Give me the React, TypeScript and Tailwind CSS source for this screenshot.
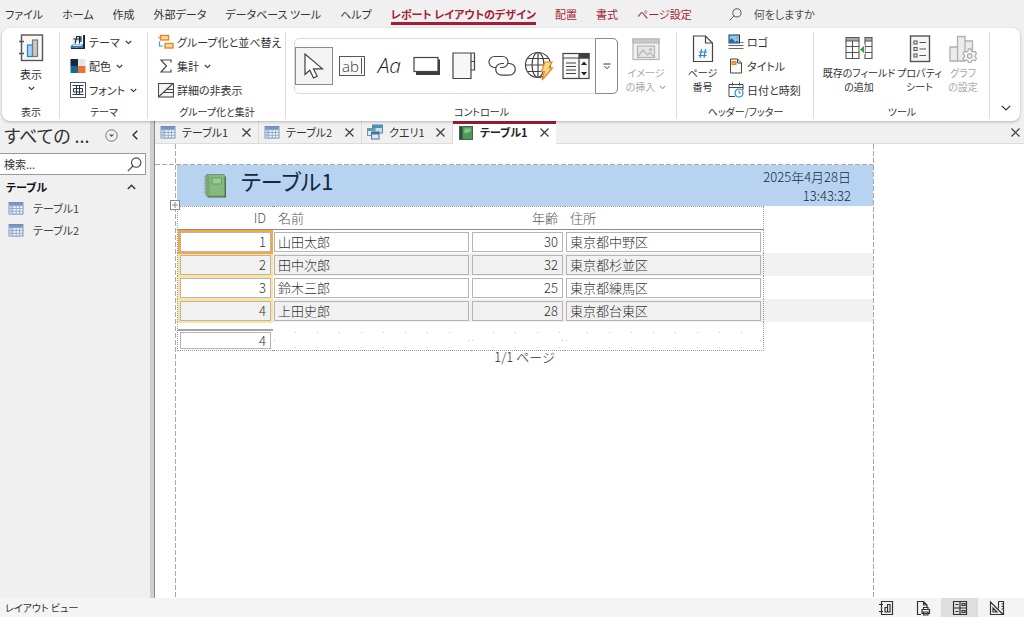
import React from "react";

type IconProps = { className?: string };

const Chevron = ({ className = "" }: IconProps) => (
  <svg viewBox="0 0 7 5" className={`h-[5px] w-[7px] shrink-0 ${className}`} fill="none" stroke="currentColor" strokeWidth="1.1">
    <path d="M0.8 1l2.7 2.6L6.2 1" />
  </svg>
);

const SearchIcon = ({ className = "" }: IconProps) => (
  <svg viewBox="0 0 15 15" className={className} fill="none" stroke="currentColor" strokeWidth="1.1">
    <circle cx="9.2" cy="5.6" r="4.7" />
    <path d="M5.9 9L0.8 14.2" />
  </svg>
);

const CloseIcon = () => (
  <svg viewBox="0 0 9 9" className="size-[9px]" fill="none" stroke="#3b3b3b" strokeWidth="1.2">
    <path d="M0.5 0.5l8 8M8.5 0.5l-8 8" />
  </svg>
);

const ReportViewIcon = () => (
  <svg viewBox="0 0 26 28" className="h-[28px] w-[26px]" fill="none" stroke="#555" strokeWidth="1.2">
    <rect x="3.5" y="1" width="21" height="25.5" fill="#f7f7f7" strokeWidth="1.4" />
    <path d="M1 7.5h5M1 19.5h5" strokeWidth="1.4" />
    <rect x="9.5" y="11" width="5" height="11.5" fill="#a8d4f7" stroke="#1e7fd0" />
    <rect x="14.5" y="6" width="5" height="16.5" fill="#c9c9c9" stroke="#777" />
  </svg>
);

const ThemeIcon = () => (
  <svg viewBox="0 0 16 16" className="size-[16px]">
    <path d="M13 1h2v13h-2z" fill="#16283f" />
    <path d="M2 4h9v4H2z" fill="#eee" />
    <path d="M5 9.500l1.800-7h2.700v7M11 2v6M3.500 5h8" stroke="#16283f" strokeWidth="1.200" fill="none" />
    <path d="M0.500 14c0-2 1-3.500 3-3.500h9.500V14z" fill="#287fc4" />
    <path d="M3 11.500h9" stroke="#c9e2f6" />
    <path d="M5 14c0-1.500 3-1.500 3 0z" fill="#ef7b2e" />
    <path d="M1 14.500h14" stroke="#16283f" />
  </svg>
);

const ColorsIcon = () => (
  <svg viewBox="0 0 16 16" className="size-[16px]">
    <rect x="0.500" y="1" width="7.500" height="7" fill="#152941" />
    <rect x="8" y="1" width="7.500" height="7" fill="#e6e6e6" />
    <rect x="0.500" y="8" width="7.500" height="7" fill="#176b8c" />
    <rect x="8" y="8" width="7.500" height="7" fill="#ed7331" />
  </svg>
);

const FontIcon = () => (
  <svg viewBox="0 0 16 16" className="size-[16px]" fill="none" stroke="#555">
    <rect x="0.500" y="0.500" width="15" height="15" />
    <path d="M2.500 3.500h11M2.500 12.500h11M6.500 3.500v9M9.500 3.500v9M3.500 6.500h9v3.500h-9z" stroke="#22364f" />
  </svg>
);

const GroupSortIcon = () => (
  <svg viewBox="0 0 16 16" className="size-[16px]" fill="none">
    <rect x="2.500" y="1.500" width="8" height="4.500" fill="#fbd9a4" stroke="#e8811c" strokeWidth="1.300" />
    <path d="M0 3.700h2.500" stroke="#e8811c" />
    <rect x="7" y="9.500" width="8" height="4.500" fill="#fbd9a4" stroke="#e8811c" strokeWidth="1.300" />
    <path d="M1.500 7.500v4.500h3.500" stroke="#3b9be0" strokeWidth="1.200" />
  </svg>
);

const SigmaIcon = () => (
  <svg viewBox="0 0 16 16" className="size-[16px]" fill="none" stroke="#4a4a4a" strokeWidth="1.200">
    <path d="M13 4.500V2H3l5.500 6L3 14h10v-2.500" />
  </svg>
);

const HideDetailsIcon = () => (
  <svg viewBox="0 0 16 16" className="size-[16px]" fill="none" stroke="#4a4a4a" strokeWidth="1.100">
    <rect x="0.500" y="1.500" width="15" height="13.500" fill="#f5f5f5" />
    <path d="M1 14.500L15 1.500M9 7.500h6M6 10.500h9" />
  </svg>
);

const ArrowIcon = () => (
  <svg viewBox="0 0 20 26" className="h-[26px] w-[20px]" fill="none" stroke="#3e3e3e" strokeWidth="1.200">
    <path d="M1 1v20.500l4.800-4.200 3.700 7.700 3.700-1.800-3.700-7.300H18.500z" fill="#fff" />
  </svg>
);

const TextBoxIcon = () => (
  <span className="flex h-[20px] w-[26px] items-center justify-center border border-[#555] bg-[#fafafa] font-['Open_Sans'] text-[15px] font-light leading-none text-[#333]">
    ab<span className="ml-[2px] h-[16px] w-px bg-[#555]" />
  </span>
);

const ButtonControlIcon = () => (
  <svg viewBox="0 0 28 20" className="h-[20px] w-[28px]">
    <path d="M3 3.500h24v15.500H3z" fill="#3e3e3e" />
    <rect x="1" y="1.500" width="24" height="14" fill="#fff" stroke="#444" strokeWidth="1.200" />
  </svg>
);

const TabControlIcon = () => (
  <svg viewBox="0 0 24 28" className="h-[28px] w-[24px]" fill="#f7f7f7" stroke="#444" strokeWidth="1.200">
    <path d="M1 1h21.500v17H19v8.500H1zM19 1v17M19 9.500h3.500" />
  </svg>
);

const LinkIcon = () => (
  <svg viewBox="0 0 28 22" className="h-[22px] w-[28px]" fill="none" stroke="#444" strokeWidth="1.200">
    <path d="M8 12.500H6.500A5.500 5.500 0 0 1 6.500 1.500h8a5.500 5.500 0 0 1 0 11H12" />
    <path d="M20 8.500h1.500a5.800 5.800 0 0 1 0 11.600h-8a5.800 5.800 0 0 1 0-11.600H16" />
  </svg>
);

const WebIcon = () => (
  <svg viewBox="0 0 30 30" className="size-[30px]" fill="none" stroke="#444" strokeWidth="1.200">
    <circle cx="14" cy="14" r="12.500" />
    <ellipse cx="14" cy="14" rx="6" ry="12.500" />
    <path d="M14 1.500v25M1.500 14h25M3.500 7.500h21M3.500 20.500h21" />
    <path d="M21 11h7l-3 6h3.500L18 29l2.500-8.500h-3z" fill="#fbd98b" stroke="#e8861e" />
  </svg>
);

const ComboIcon = () => (
  <svg viewBox="0 0 28 28" className="size-[28px]" fill="none" stroke="#444" strokeWidth="1.200">
    <rect x="1" y="1.500" width="26" height="25" fill="#f7f7f7" />
    <path d="M17 1.500h10V6H17z" fill="#3c3c3c" />
    <path d="M1 6h26M17 6v20.500M4 11h10M4 14.500h10M4 18h10M4 21.500h10" />
    <path d="M22 9.500l3 3.500h-6zM22 23.500l3-3.500h-6z" fill="#222" stroke="none" />
  </svg>
);

const ImageIcon = () => (
  <svg viewBox="0 0 28 24" className="h-[24px] w-[28px]" fill="none" stroke="#b5b5b5" strokeWidth="1.200">
    <rect x="1" y="1" width="26" height="20.500" fill="#f1f1f1" />
    <path d="M1 1h26v4H1z" fill="#c8c8c8" />
    <rect x="5.500" y="8" width="17" height="11.500" fill="#e5e5e5" />
    <path d="M6 18l5-6 4.500 5 2.500-2.500 4 4" />
    <circle cx="18.500" cy="11.500" r="1" />
  </svg>
);

const PageNumberIcon = () => (
  <svg viewBox="0 0 22 28" className="h-[28px] w-[22px]" fill="none" stroke="#444" strokeWidth="1.200">
    <path d="M1.500 1h12l7 7v18.500h-19z" fill="#fafafa" />
    <path d="M13.500 1v7h7" />
    <path d="M9.500 14l-1.500 9M13.500 14L12 23M7 17h8M6.500 20.500h8" stroke="#2487d3" strokeWidth="1.200" />
  </svg>
);

const LogoIcon = () => (
  <svg viewBox="0 0 16 16" className="size-[16px]" fill="none">
    <rect x="1" y="1" width="10.500" height="8" fill="#8cc6ef" stroke="#22364f" />
    <path d="M1.500 8.500V6l2.500-1.500L7 8l2-1.500 2 2z" fill="#1767ab" />
    <circle cx="9" cy="3.500" r="1" fill="#f08a2c" />
    <path d="M0.500 11.500h15M0.500 14.500h15M12.500 8.500h3" stroke="#666" />
  </svg>
);

const TitleIcon = () => (
  <svg viewBox="0 0 16 16" className="size-[16px]" fill="none" stroke="#444">
    <path d="M2.500 1h7l4 4v10h-11z" fill="#fafafa" />
    <path d="M9.500 1v4h4" />
    <rect x="4" y="3.500" width="4" height="3" fill="#f5a04c" stroke="#e8811c" />
  </svg>
);

const DateIcon = () => (
  <svg viewBox="0 0 16 16" className="size-[16px]" fill="none" stroke="#444">
    <path d="M1 2.500h14V8M1 2.500v12h6M1 5.500h14M4.500 0.500v3M11.500 0.500v3" />
    <circle cx="11" cy="11" r="4" fill="#fff" stroke="#2487d3" strokeWidth="1.200" />
    <path d="M11 8.500V11h2" stroke="#2487d3" />
  </svg>
);

const AddFieldsIcon = () => (
  <svg viewBox="0 0 28 24" className="h-[24px] w-[28px]" fill="none" stroke="#555" strokeWidth="1.100">
    <path d="M1 1.500h13V5H1zM20 1.500h7V5h-7z" fill="#a9a9a9" />
    <path d="M1 5v17.500h13V5M1 10.500h13M1 16.500h13M7.500 5v17.500M20 5v17.500h7V5M20 10.500h7M20 16.500h7" />
    <path d="M19.500 9v9L14.500 13.500z" fill="#35a047" stroke="#fff" strokeWidth="0.800" />
  </svg>
);

const PropertyIcon = () => (
  <svg viewBox="0 0 22 28" className="h-[28px] w-[22px]" fill="none" stroke="#555" strokeWidth="1.100">
    <rect x="1.500" y="1" width="19" height="25.500" fill="#f5f5f5" strokeWidth="1.400" />
    <path d="M5 6h3v3H5zM5 12.500h3v3H5zM5 19h3v3H5zM10.500 7.500H17M10.500 14H17M10.500 20.500H17" />
  </svg>
);

const ChartSettingsIcon = () => (
  <svg viewBox="0 0 28 28" className="size-[28px]" fill="#ececec" stroke="#b0b0b0" strokeWidth="1.300">
    <path d="M1 12h7.500v14H1zM8.500 1.500h7.500v24.500H8.500zM16 6h7.500v12H16z" />
    <path d="M19.500 14h2.500l.6 2.200 1.600.9 2.200-.6 1.100 2.100-1.500 1.600v1.600l1.500 1.600-1.100 2.100-2.200-.6-1.600.9-.6 1.700h-2.500l-.6-1.700-1.600-.9-2.200.6-1.100-2.100 1.500-1.600v-1.600l-1.500-1.600 1.100-2.100 2.200.6 1.600-.9z" fill="#fff" />
    <circle cx="20.700" cy="21" r="2.400" />
  </svg>
);

const TableIcon = () => (
  <svg viewBox="0 0 16 14" className="h-[13px] w-[16px] shrink-0">
    <rect x="0.500" y="0.500" width="15" height="12.500" fill="#f4f8fd" stroke="#6f87ad" />
    <path d="M1 1h14v3H1z" fill="#6f8fc4" />
    <path d="M1 4v9h3.500V4z" fill="#c2d2ea" />
    <path d="M1 4h14M1 7h14M1 10h14M4.500 1v12M8.200 1v12M11.800 1v12" stroke="#8fa8cf" />
  </svg>
);

const QueryIcon = () => (
  <svg viewBox="0 0 16 16" className="size-[16px] shrink-0">
    <rect x="5.500" y="1" width="10" height="8" fill="#c8e0ea" stroke="#4f88a8" />
    <path d="M5.500 1h10v3h-10z" fill="#4f93b0" />
    <rect x="0.500" y="4.500" width="7.500" height="7" fill="#dcebf3" stroke="#7793a8" />
    <path d="M0.500 4.500H8V7H0.500z" fill="#5f9db9" />
    <rect x="4.500" y="8" width="7.500" height="7" fill="#dbe9f3" stroke="#4f6f98" />
    <path d="M4.500 8h7.500v2.500h-7.500z" fill="#4472a8" />
  </svg>
);

const NotebookIcon = ({ className = "" }: IconProps) => (
  <svg viewBox="0 0 24 26" className={className}>
    <path d="M4.500 3.500H23v21H4.500z" fill="#4c6f52" />
    <rect x="3" y="1.500" width="18.500" height="21.500" rx="1" fill="#86b880" stroke="#6a9a6c" />
    <path d="M3 1.500h3.500V23H3z" fill="#75a873" />
    <rect x="9" y="5" width="9.500" height="6" fill="#9dca92" stroke="#66a069" />
    <path d="M0.800 4h4M0.800 7h4M0.800 10h4M0.800 13h4M0.800 16h4M0.800 19h4" stroke="#8a9a8c" strokeWidth="1.200" />
  </svg>
);

const ReportTabIcon = () => (
  <svg viewBox="0 0 14 14" className="size-[14px] shrink-0">
    <rect x="0.500" y="0.500" width="13" height="13" fill="#4f9a5a" stroke="#48664e" />
    <path d="M1 1h2.500v12H1z" fill="#2d4f38" />
    <path d="M5.500 2.500h6v3l-6 2z" fill="#85c483" />
  </svg>
);

const plainTabs = ["ファイル", "ホーム", "作成", "外部データ", "データベース ツール", "ヘルプ"];
const contextTabs = ["配置", "書式", "ページ設定"];

function MenuBar() {
  return (
    <nav className="flex h-[28px] shrink-0 items-center gap-[19px] pl-[5px] text-[11px]">
      {plainTabs.map((t) => (
        <button key={t} className="h-[22px] whitespace-nowrap">{t}</button>
      ))}
      <button className="h-[22px] whitespace-nowrap border-b-[3px] border-[#a51d36] pt-[3px] font-bold leading-[16px] text-[#a51d36]">
        レポート レイアウトのデザイン
      </button>
      {contextTabs.map((t) => (
        <button key={t} className="h-[22px] whitespace-nowrap text-[#a51d36]">{t}</button>
      ))}
      <button className="ml-[18px] flex items-center gap-[12px] whitespace-nowrap text-[#505050]">
        <SearchIcon className="size-[13px]" />
        何をしますか
      </button>
    </nav>
  );
}

function Group({ label, className, children }: { label: string; className: string; children: React.ReactNode }) {
  return (
    <section className={`relative flex flex-col ${className}`}>
      <div className="flex h-[74px]">{children}</div>
      <h2 className="text-center text-[10px] leading-[16px]">{label}</h2>
      <span className="absolute inset-y-[2px] right-0 w-px bg-[#dcdcdc]" />
    </section>
  );
}

function SmallButton({ icon, label, menu }: { icon: React.ReactNode; label: string; menu?: boolean }) {
  return (
    <button className="flex h-[24px] items-center gap-[3px] whitespace-nowrap">
      {icon}
      {label}
      {menu && <Chevron className="ml-[2px]" />}
    </button>
  );
}

function LargeButton({ icon, lines, menu, disabled, className = "" }: {
  icon: React.ReactNode; lines: string[]; menu?: boolean; disabled?: boolean; className?: string;
}) {
  return (
    <button disabled={disabled} className={`flex flex-col items-center whitespace-nowrap text-[10px] leading-[14px] disabled:text-[#a8a8a8] ${className}`}>
      <span className="mt-[5px] flex h-[31px] items-start">{icon}</span>
      {lines.map((l, i) => (
        <span key={l} className="flex h-[14px] items-center gap-[4px]">
          {l}
          {menu && i === lines.length - 1 && <Chevron />}
        </span>
      ))}
    </button>
  );
}

function Gallery() {
  const items: [string, React.ReactNode][] = [
    ["テキスト ボックス", <TextBoxIcon />],
    ["ラベル", <span className="font-['Open_Sans'] text-[21px] font-light italic text-[#222]">Aa</span>],
    ["ボタン", <ButtonControlIcon />],
    ["タブ コントロール", <TabControlIcon />],
    ["リンク", <LinkIcon />],
    ["Web ブラウザー コントロール", <WebIcon />],
    ["コンボ ボックス", <ComboIcon />],
  ];
  return (
    <div className="mt-[8px] ml-[8px] flex h-[56px] w-[324px] rounded-[5px] border border-[#dadada]">
      <div className="flex flex-1 items-center justify-between">
        <button aria-label="選択" className="flex h-[38px] w-[38px] items-center justify-center border border-[#8a8a8a] bg-[#f3f3f3]">
          <ArrowIcon />
        </button>
        {items.map(([name, icon]) => (
          <button key={name} aria-label={name} className="flex h-[38px] w-[37px] items-center justify-center">
            {icon}
          </button>
        ))}
      </div>
      <button aria-label="その他" className="-my-px -mr-px flex w-[23px] items-center justify-center rounded-r-[5px] border border-[#8a8a8a]">
        <svg viewBox="0 0 8 7" className="h-[7px] w-[8px]" fill="none" stroke="#333">
          <path d="M0.500 1h7M1.500 3.200l2.500 2.500 2.500-2.500" />
        </svg>
      </button>
    </div>
  );
}

function Ribbon() {
  return (
    <div className="relative z-20 ml-[2px] mr-[4px] flex h-[93px] shrink-0 rounded-[8px] bg-white pt-[2px] text-[11px] shadow-[0_1px_3px_rgba(0,0,0,0.25)]">
      <Group label="表示" className="w-[58px]">
        <button className="mx-auto flex flex-col items-center pt-[4px] leading-[14px]">
          <ReportViewIcon />
          <span className="mt-[5px]">表示</span>
          <Chevron className="mt-[5px]" />
        </button>
      </Group>
      <Group label="テーマ" className="w-[88px]">
        <div className="ml-[10px] flex flex-col">
          <SmallButton icon={<ThemeIcon />} label="テーマ" menu />
          <SmallButton icon={<ColorsIcon />} label="配色" menu />
          <SmallButton icon={<FontIcon />} label="フォント" menu />
        </div>
      </Group>
      <Group label="グループ化と集計" className="w-[138px]">
        <div className="ml-[10px] flex flex-col">
          <SmallButton icon={<GroupSortIcon />} label="グループ化と並べ替え" />
          <SmallButton icon={<SigmaIcon />} label="集計" menu />
          <SmallButton icon={<HideDetailsIcon />} label="詳細の非表示" />
        </div>
      </Group>
      <Group label="コントロール" className="w-[391px]">
        <Gallery />
        <LargeButton icon={<span className="pt-[3px]"><ImageIcon /></span>} lines={["イメージ", "の挿入"]} menu disabled className="w-[56px]" />
      </Group>
      <Group label="ヘッダー/フッター" className="w-[137px]">
        <LargeButton icon={<PageNumberIcon />} lines={["ページ", "番号"]} className="w-[51px]" />
        <div className="flex flex-col">
          <SmallButton icon={<LogoIcon />} label="ロゴ" />
          <SmallButton icon={<TitleIcon />} label="タイトル" />
          <SmallButton icon={<DateIcon />} label="日付と時刻" />
        </div>
      </Group>
      <Group label="ツール" className="w-[176px]">
        <LargeButton icon={<span className="pt-[1px]"><AddFieldsIcon /></span>} lines={["既存のフィールド", "の追加"]} className="ml-[6px] w-[78px]" />
        <LargeButton icon={<PropertyIcon />} lines={["プロパティ", "シート"]} className="w-[43px]" />
        <LargeButton icon={<ChartSettingsIcon />} lines={["グラフ", "の設定"]} disabled className="w-[44px]" />
      </Group>
      <button aria-label="リボンを折りたたむ" className="ml-auto mr-[9px] mb-[10px] self-end">
        <svg viewBox="0 0 10 6" className="h-[6px] w-[10px]" fill="none" stroke="#333" strokeWidth="1.200">
          <path d="M0.800 0.800L5 5l4.200-4.200" />
        </svg>
      </button>
    </div>
  );
}

function NavigationPane() {
  return (
    <aside className="flex w-[155px] shrink-0 border-r border-[#8a8a8a] bg-[#f0f0f0]">
      <div className="flex min-w-0 flex-1 flex-col">
        <header className="flex h-[32px] items-center pb-[4px] pl-[4px]">
          <h1 className="w-[101px] whitespace-nowrap text-[18px] leading-[26px] text-[#333]">すべての ...</h1>
          <button aria-label="オブジェクトの種類">
            <svg viewBox="0 0 13 13" className="size-[13px]" fill="none" stroke="#777">
              <circle cx="6.500" cy="6.500" r="5.700" />
              <path d="M4 5.500h5L6.500 8z" fill="#555" stroke="none" />
            </svg>
          </button>
          <button aria-label="ウィンドウを閉じる" className="ml-[14px]">
            <svg viewBox="0 0 6 10" className="h-[10px] w-[6px]" fill="none" stroke="#333" strokeWidth="1.500">
              <path d="M5.300 0.700L1 5l4.300 4.300" />
            </svg>
          </button>
        </header>
        <label className="mr-[4px] flex h-[22px] items-center border border-l-0 border-[#9a9a9a] bg-white pr-[3px]">
          <input type="text" aria-label="検索" placeholder="検索..." className="min-w-0 flex-1 bg-transparent pl-[4px] text-[11px] placeholder:text-[#333] outline-none" />
          <SearchIcon className="size-[15px] text-[#444]" />
        </label>
        <button className="flex h-[22px] items-center justify-between pt-[2px] pl-[6px] pr-[14px] text-[11px] font-bold text-[#111]">
          テーブル
          <svg viewBox="0 0 9 6" className="h-[6px] w-[9px]" fill="none" stroke="#333" strokeWidth="1.400">
            <path d="M0.800 5L4.500 1.200 8.200 5" />
          </svg>
        </button>
        <ul className="text-[11px] text-[#444]">
          {["テーブル1", "テーブル2"].map((t) => (
            <li key={t}>
              <button className="flex h-[22px] w-full items-center gap-[9px] pl-[8px]">
                <TableIcon />
                {t}
              </button>
            </li>
          ))}
        </ul>
      </div>
      <div className="w-[4px] bg-[#cfcfcf]" />
    </aside>
  );
}

function DocumentTabs() {
  const tabs = [
    { name: "テーブル1", icon: <TableIcon />, width: "w-[104px]" },
    { name: "テーブル2", icon: <TableIcon />, width: "w-[103px]" },
    { name: "クエリ1", icon: <QueryIcon />, width: "w-[91px]" },
  ];
  return (
    <div className="flex h-[23px] shrink-0 bg-[#f0f0f0] text-[11px]">
      {tabs.map((t) => (
        <div key={t.name} className={`flex items-center border-b border-r border-[#dcdcdc] pl-[5px] pr-[7px] ${t.width}`}>
          <button className="flex items-center gap-[6px]">
            {t.icon}
            {t.name}
          </button>
          <button aria-label={`${t.name}を閉じる`} className="ml-auto"><CloseIcon /></button>
        </div>
      ))}
      <div className="flex w-[103px] items-center border-t-[3px] border-[#a51d36] bg-white pb-[3px] pl-[6px] pr-[7px]">
        <button className="flex items-center gap-[7px] font-bold text-[#222]">
          <ReportTabIcon />
          テーブル1
        </button>
        <button aria-label="レポートを閉じる" className="ml-auto"><CloseIcon /></button>
      </div>
      <div className="flex flex-1 items-center justify-end border-b border-[#dcdcdc] pr-[4px]">
        <button aria-label="閉じる"><CloseIcon /></button>
      </div>
    </div>
  );
}

const people = [
  { id: 1, name: "山田太郎", age: 30, address: "東京都中野区" },
  { id: 2, name: "田中次郎", age: 32, address: "東京都杉並区" },
  { id: 3, name: "鈴木三郎", age: 25, address: "東京都練馬区" },
  { id: 4, name: "上田史郎", age: 28, address: "東京都台東区" },
];

const VerticalGuide = () => (
  <div className="w-px shrink-0 bg-[repeating-linear-gradient(to_bottom,#a8a8a8_0_5px,transparent_5px_7px)]" />
);
const HorizontalGuide = () => (
  <div className="h-px shrink-0 bg-[repeating-linear-gradient(to_right,#a8a8a8_0_5px,transparent_5px_7px)]" />
);

const box = "h-[20px] border border-[#b5b5b5] pl-[3px] pr-[4px] leading-[17px]";

const EmptyTotal = () => (
  <div className="mt-[3px] flex h-[16px] flex-col justify-between">
    <div className="h-px bg-[repeating-linear-gradient(to_right,transparent_0_21px,#c0c0c0_21px_22px)]" />
    <div className="flex justify-between">
      <span className="size-px bg-[#c0c0c0]" />
      <span className="size-px bg-[#c0c0c0]" />
    </div>
    <div className="h-px bg-[repeating-linear-gradient(to_right,transparent_0_21px,#c0c0c0_21px_22px)]" />
  </div>
);

function ReportTable() {
  return (
    <table className="w-full table-fixed border-separate border-spacing-0 text-[13px] font-light">
      <colgroup>
        <col className="w-[96px]" />
        <col className="w-[198px]" />
        <col className="w-[94px]" />
        <col className="w-[199px]" />
        <col />
      </colgroup>
      <thead className="text-[#555]">
        <tr className="h-[24px]">
          {["ID", "名前", "年齢", "住所"].map((h, i) => (
            <th
              key={h}
              className={`border-t border-b border-dotted border-t-[#999] border-b-[#8c8c8c] pl-[5px] pr-[7px] pb-[1px] font-light leading-[20px] [border-bottom-style:solid] ${i % 2 ? "text-left" : "text-right"} ${i === 0 ? "border-l border-l-[#999]" : ""} ${i === 3 ? "border-r border-r-[#999]" : ""}`}
            >
              {h}
            </th>
          ))}
          <td />
        </tr>
      </thead>
      <tbody>
        {people.map((p) => (
          <tr key={p.id} className="h-[23px] text-[#333] even:bg-[#f1f1f1]">
            <td className="border-l border-dotted border-[#999] pt-[2px] pb-[1px] pl-[2px] pr-[2px]">
              <div className={`${box} text-right outline-2 ${p.id === 1 ? "relative z-10 outline-[#faa63f]" : "outline-[#fde49b]"}`}>{p.id}</div>
            </td>
            <td className="pt-[2px] pb-[1px] pl-[1px] pr-[2px]"><div className={box}>{p.name}</div></td>
            <td className="pt-[2px] pb-[1px] pl-[1px] pr-[2px]"><div className={`${box} text-right`}>{p.age}</div></td>
            <td className="border-r border-dotted border-[#999] pt-[2px] pb-[1px] pl-[1px] pr-[2px]"><div className={box}>{p.address}</div></td>
            <td />
          </tr>
        ))}
      </tbody>
      <tfoot>
        <tr className="align-top text-[#333]">
          <td className="border-b border-l border-dotted border-[#999] pt-[7px] pb-[1px]">
            <div className="h-[2px] bg-[#a5a5a5]" />
            <div className="mt-px ml-[2px] mr-[2px] h-[17px] border border-[#b5b5b5] pl-[3px] pr-[4px] text-right leading-[16px]">{people.length}</div>
          </td>
          <td className="border-b border-dotted border-[#999] pt-[7px] pl-[1px] pr-[2px]"><EmptyTotal /></td>
          <td className="border-b border-dotted border-[#999] pt-[7px] pl-[1px] pr-[2px]"><EmptyTotal /></td>
          <td className="border-b border-r border-dotted border-[#999] pt-[7px] pl-[1px] pr-[2px]"><EmptyTotal /></td>
          <td />
        </tr>
      </tfoot>
    </table>
  );
}

function ReportCanvas() {
  return (
    <main className="flex min-h-0 flex-1 overflow-hidden bg-white">
      <div className="w-[20px] shrink-0 pt-[20px]"><HorizontalGuide /></div>
      <VerticalGuide />
      <article className="flex w-[697px] shrink-0 flex-col pt-[20px]">
        <HorizontalGuide />
        <div className="relative ml-px">
          <header className="flex h-[41px] bg-[#b8d3f0] pr-[22px]">
            <NotebookIcon className="mt-[8px] ml-[26px] h-[26px] w-[24px]" />
            <h2 className="ml-[14px] text-[22px] leading-[30px] text-[#14283f]">テーブル1</h2>
            <div className="ml-auto flex flex-col pt-[2px] text-right text-[13px] font-light leading-[19px] text-[#14283f]">
              <time>2025年4月28日</time>
              <time>13:43:32</time>
            </div>
          </header>
          <button aria-label="レイアウト全体を選択" className="absolute top-[35px] -left-[7px] size-[10px]">
            <svg viewBox="0 0 10 10" className="size-[10px]" stroke="#8a8a8a">
              <rect x="0.500" y="0.500" width="9" height="9" fill="#fff" />
              <path d="M5 2v6M2 5h6" />
            </svg>
          </button>
          <ReportTable />
        </div>
        <p className="text-center text-[13px] font-light leading-[12px] text-[#333]">1/1 ページ</p>
      </article>
      <VerticalGuide />
    </main>
  );
}

function StatusBar() {
  const views: [string, boolean, React.ReactNode][] = [
    ["レポート ビュー", false, <path d="M3.500 1.500h11v13h-11zM1 4.500h4M1 11.500h4M7 12V7.500h2.500V12zM9.500 12V4.500H12V12z" />],
    ["印刷プレビュー", false, <path d="M6 14.500H2.500v-13h6l3.500 3.500v2M8.500 1.500V5H12M7 9.500h7.500v4H7zM8.500 9.500v-2h4.500v2M8.500 12h4.500v3H8.500z" />],
    ["レイアウト ビュー", true, <path d="M1.500 1.500h13v13h-13zM1.500 8h13M8 1.500v13M3.500 4.500h3M10 3.500h3v2h-3zM3.500 11.500h3M10 10.500h3v2h-3z" />],
    ["デザイン ビュー", false, <path d="M1.500 2v12.500H14zM4 8v4h4zM9.500 1.500h5v13M9.500 1.500v7M12.500 4h2M12.500 6.500h2M12.500 9h2" />],
  ];
  return (
    <footer className="flex h-[19px] shrink-0 items-center bg-[#f4f4f4] pl-[5px] pr-[9px] text-[10px]">
      <span>レイアウト ビュー</span>
      <div className="ml-auto flex h-full">
        {views.map(([name, on, shape]) => (
          <button key={name} aria-label={name} aria-pressed={on} className={`flex w-[37px] items-center justify-center ${on ? "bg-[#dedede]" : ""}`}>
            <svg viewBox="0 0 16 16" className="size-[16px]" fill="none" stroke="#333" strokeWidth="1.200">{shape}</svg>
          </button>
        ))}
      </div>
    </footer>
  );
}

export default function App() {
  return (
    <div className="flex h-screen flex-col overflow-hidden bg-[#f0f0f0] font-['Noto_Sans_CJK_JP',sans-serif] text-[#333] [font-feature-settings:'palt']">
      <MenuBar />
      <Ribbon />
      <div className="flex min-h-0 flex-1">
        <NavigationPane />
        <div className="flex min-w-0 flex-1 flex-col">
          <DocumentTabs />
          <ReportCanvas />
        </div>
      </div>
      <StatusBar />
    </div>
  );
}
